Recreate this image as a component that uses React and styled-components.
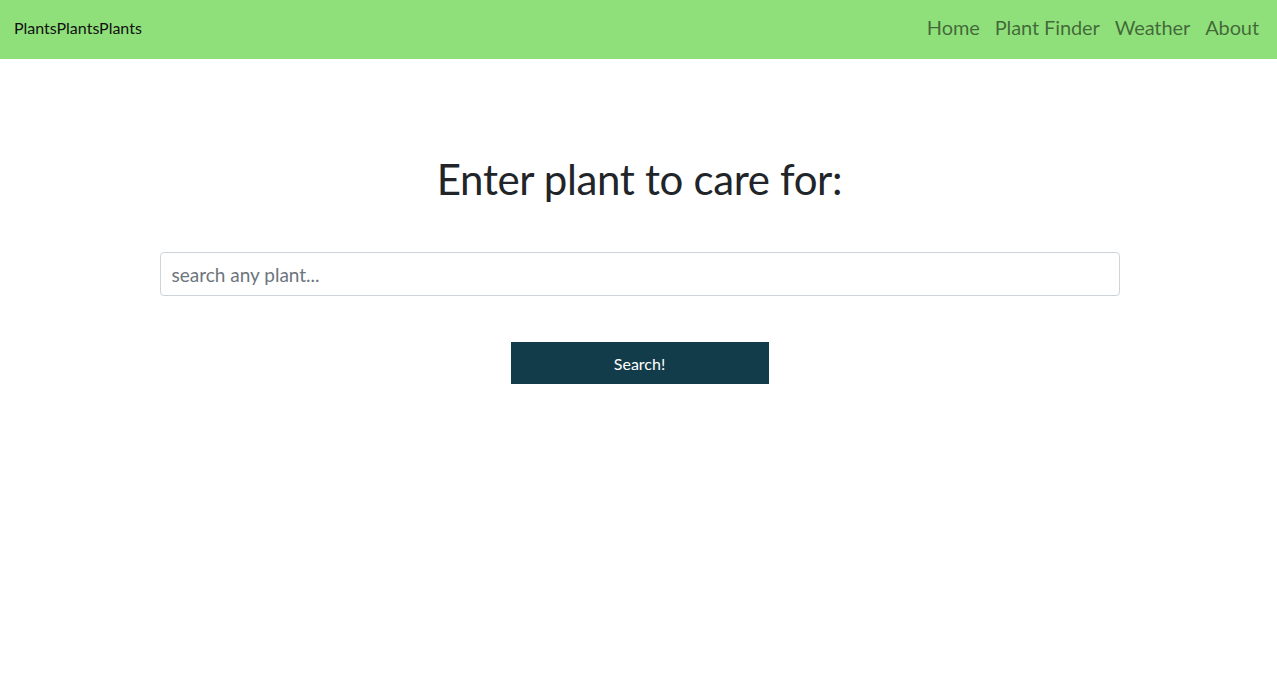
import React from "react";
import styled, { createGlobalStyle } from "styled-components";

const Global = createGlobalStyle`
  html, body { margin: 0; padding: 0; background: #fff; }
  body { font-family: Lato, "Open Sans", sans-serif; color: #212529; }
  * { box-sizing: border-box; }
`;

const NavBar = styled.nav`
  height: 59px;
  background: #8fdf7a;
  display: flex;
  align-items: center;
  justify-content: space-between;
  padding: 0 14px 5px;
`;

const Brand = styled.a`
  font-size: 16px;
  color: #111;
  text-decoration: none;
  letter-spacing: 0;
`;

const Links = styled.div`
  display: flex;
  gap: 15px;
  padding-right: 4px;
`;

const NavLink = styled.a`
  font-size: 20px;
  color: rgba(0, 0, 0, 0.55);
  text-decoration: none;
  letter-spacing: -0.1px;
`;

const Main = styled.main`
  display: flex;
  flex-direction: column;
  align-items: center;
  padding-top: 95px;
  padding-left: 2px;
`;

const Title = styled.h1`
  margin: 0;
  font-size: 42px;
  font-weight: 400;
  line-height: 1.2;
  color: #212529;
  letter-spacing: -0.35px;
`;

const SearchInput = styled.input`
  margin-top: 48px;
  width: 960px;
  height: 44px;
  border: 1px solid #ced4da;
  border-radius: 4px;
  padding: 0 11px;
  font-family: inherit;
  font-size: 19px;
  color: #212529;
  &::placeholder { color: #6c757d; }
  outline: none;
`;

const SearchButton = styled.button`
  margin-top: 46px;
  width: 258px;
  height: 42px;
  border: none;
  background: #133c4a;
  color: #fff;
  font-family: inherit;
  font-size: 16px;
  cursor: pointer;
`;

export default function App() {
  return (
    <>
      <Global />
      <NavBar>
        <Brand href="#">PlantsPlantsPlants</Brand>
        <Links>
          <NavLink href="#">Home</NavLink>
          <NavLink href="#">Plant Finder</NavLink>
          <NavLink href="#">Weather</NavLink>
          <NavLink href="#">About</NavLink>
        </Links>
      </NavBar>
      <Main>
        <Title>Enter plant to care for:</Title>
        <SearchInput placeholder="search any plant..." />
        <SearchButton>Search!</SearchButton>
      </Main>
    </>
  );
}
